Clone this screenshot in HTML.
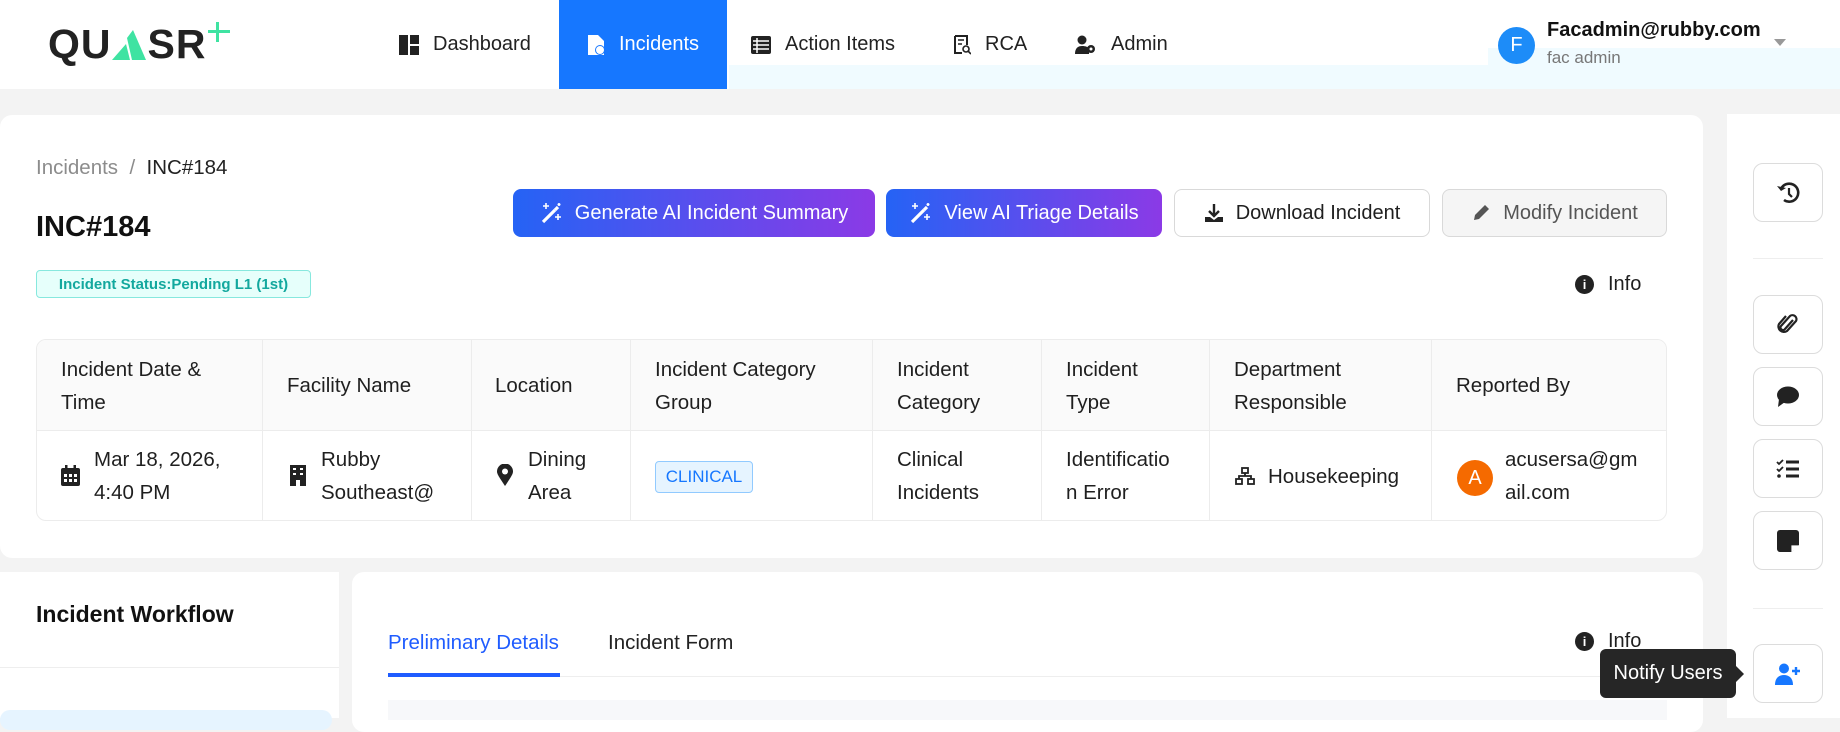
<!DOCTYPE html>
<html><head><meta charset="utf-8"><style>
*{box-sizing:border-box;margin:0;padding:0}
body{width:1840px;height:718px;overflow:hidden;background:#f3f3f3;font-family:"Liberation Sans",sans-serif;color:#1f1f1f;position:relative}
.abs{position:absolute}
.hdr{left:0;top:0;width:1840px;height:89px;background:#fff}
.nav{top:0;height:89px;display:flex;align-items:center;font-size:20px;color:#222}
.nav svg{margin-right:14px}
.card{background:#fff;border-radius:12px}
.btn{top:189px;height:48px;border-radius:8px;display:flex;align-items:center;justify-content:center;font-size:20px}
.grad{background:linear-gradient(90deg,#2563f5,#8b3ae6);color:#fff}
.th,.td{position:absolute;font-size:20.5px;line-height:33px}
.vl{position:absolute;top:339px;width:1px;height:182px;background:#ececec}
.sb{left:1753px;width:70px;height:59px;border:1px solid #dcdcdc;border-radius:10px;background:#fff;display:flex;align-items:center;justify-content:center}
</style></head><body>
<div class="abs hdr"></div>
<div class="abs" style="left:729px;top:65px;width:1111px;height:24px;background:#f0fbff"></div>
<div class="abs" style="left:1488px;top:48px;width:352px;height:41px;background:#f0fbff"></div>
<!-- logo -->
<div class="abs" style="left:48px;top:22px;font-size:41px;font-weight:bold;letter-spacing:1px;color:#222;line-height:44px">QU<span style="display:inline-block;width:36px"></span>SR</div>
<svg class="abs" style="left:112px;top:30px" width="36" height="30"><polygon points="0,30 14,14 18,30" fill="#3fe3a2"/><polygon points="21,0 34,30 20,30 15,8" fill="#3fe3a2"/></svg>
<svg class="abs" style="left:208px;top:22px" width="22" height="20"><rect x="8" y="0" width="3" height="20" fill="#3fe3a2"/><rect x="0" y="8" width="22" height="3" fill="#3fe3a2"/></svg>
<!-- nav -->
<div class="abs nav" style="left:399px"><svg width="20" height="20"><rect x="0" y="0" width="9" height="20" fill="#222"/><rect x="11" y="0" width="9" height="9" fill="#222"/><rect x="11" y="11" width="9" height="9" fill="#222"/></svg>Dashboard</div>
<div class="abs nav" style="left:559px;width:168px;background:#1677ff;color:#fff;justify-content:center"><svg width="18" height="20"><path d="M1 0h10l6 6v14H1z" fill="#fff"/><circle cx="13" cy="15" r="5" fill="#1677ff"/><circle cx="13" cy="15" r="4" fill="#fff"/></svg>Incidents</div>
<div class="abs nav" style="left:751px"><svg width="20" height="18"><rect x="0" y="0" width="20" height="18" rx="2" fill="#222"/><path d="M2 5h16M2 9h16M2 13h16M6 2v15" stroke="#fff" stroke-width="1.5"/></svg>Action Items</div>
<div class="abs nav" style="left:953px"><svg width="18" height="20"><path d="M2 1h12v9M2 1v17h7" stroke="#222" stroke-width="2" fill="none"/><path d="M5 5h6M5 9h4" stroke="#222" stroke-width="1.5"/><circle cx="13" cy="14" r="3" stroke="#222" stroke-width="1.6" fill="none"/><path d="M15 16l3 3" stroke="#222" stroke-width="1.6"/></svg>RCA</div>
<div class="abs nav" style="left:1075px"><svg width="22" height="20"><circle cx="7" cy="5" r="4.5" fill="#222"/><path d="M0 19c0-6 3-8 7-8s6 1 7 3v5z" fill="#222"/><circle cx="16" cy="14" r="4" fill="#222"/><circle cx="16" cy="14" r="1.5" fill="#fff"/></svg>Admin</div>
<!-- user -->
<div class="abs" style="left:1498px;top:27px;width:37px;height:37px;border-radius:50%;background:#1d8cf8;color:#fff;font-size:20px;display:flex;align-items:center;justify-content:center">F</div>
<div class="abs" style="left:1547px;top:19px;font-size:20px;font-weight:bold;color:#111">Facadmin@rubby.com</div>
<div class="abs" style="left:1547px;top:48px;font-size:17px;color:#777">fac admin</div>
<div class="abs" style="left:1774px;top:39px;width:0;height:0;border-left:6px solid transparent;border-right:6px solid transparent;border-top:7px solid #999"></div>
<!-- top card -->
<div class="abs card" style="left:0;top:115px;width:1703px;height:443px"></div>
<div class="abs" style="left:36px;top:156px;font-size:20.5px;color:#8c8c8c">Incidents &nbsp;/&nbsp; <span style="color:#222">INC#184</span></div>
<div class="abs" style="left:36px;top:211px;font-size:29px;font-weight:bold;color:#111">INC#184</div>
<div class="abs" style="left:36px;top:270px;width:275px;height:28px;border:1px solid #87e8de;background:#e6fffb;border-radius:4px;color:#13a89e;font-size:15px;font-weight:bold;display:flex;align-items:center;justify-content:center">Incident Status:Pending L1 (1st)</div>
<div class="abs btn grad" style="left:513px;width:362px"><svg width="22" height="22" style="margin-right:13px"><path d="M3 20L15 8" stroke="#fff" stroke-width="3.2"/><path d="M15 8l3-3" stroke="#fff" stroke-width="3.2"/><path d="M6 1v6M3 4h6M18 12v6M15 15h6M19 1v3M17.5 2.5h3" stroke="#fff" stroke-width="1.6"/></svg>Generate AI Incident Summary</div>
<div class="abs btn grad" style="left:886px;width:276px"><svg width="22" height="22" style="margin-right:13px"><path d="M3 20L15 8" stroke="#fff" stroke-width="3.2"/><path d="M15 8l3-3" stroke="#fff" stroke-width="3.2"/><path d="M6 1v6M3 4h6M18 12v6M15 15h6M19 1v3M17.5 2.5h3" stroke="#fff" stroke-width="1.6"/></svg>View AI Triage Details</div>
<div class="abs btn" style="left:1174px;width:256px;border:1px solid #d9d9d9;background:#fff"><svg width="20" height="20" style="margin-right:12px"><path d="M10 1v11M5 8l5 5 5-5" stroke="#222" stroke-width="2.4" fill="none"/><path d="M1 14h5l4 3 4-3h5v5H1z" fill="#222"/></svg>Download Incident</div>
<div class="abs btn" style="left:1442px;width:225px;border:1px solid #d9d9d9;background:#f5f5f5;color:#555"><svg width="20" height="20" style="margin-right:12px"><path d="M3 17l1-5L14 2l4 4L8 16z" fill="#555"/></svg>Modify Incident</div>
<div class="abs" style="left:1575px;top:273px;font-size:20px;display:flex;align-items:center"><span style="display:inline-block;width:19px;height:19px;border-radius:50%;background:#222;color:#fff;font-size:13px;font-weight:bold;text-align:center;line-height:19px;margin-right:14px">i</span>Info</div>
<!-- table -->
<div class="abs" style="left:36px;top:339px;width:1631px;height:182px;border:1px solid #ececec;border-radius:10px;overflow:hidden"><div style="height:91px;background:#fafafa;border-bottom:1px solid #ececec"></div></div>
<div class="vl" style="left:262px"></div><div class="vl" style="left:471px"></div><div class="vl" style="left:630px"></div><div class="vl" style="left:872px"></div><div class="vl" style="left:1041px"></div><div class="vl" style="left:1209px"></div><div class="vl" style="left:1431px"></div>
<div class="th" style="left:61px;top:353px">Incident Date &amp;<br>Time</div>
<div class="th" style="left:287px;top:369px">Facility Name</div>
<div class="th" style="left:495px;top:369px">Location</div>
<div class="th" style="left:655px;top:353px">Incident Category<br>Group</div>
<div class="th" style="left:897px;top:353px">Incident<br>Category</div>
<div class="th" style="left:1066px;top:353px">Incident<br>Type</div>
<div class="th" style="left:1234px;top:353px">Department<br>Responsible</div>
<div class="th" style="left:1456px;top:369px">Reported By</div>
<svg class="abs" style="left:61px;top:465px" width="19" height="21"><rect x="0" y="3" width="19" height="18" rx="2" fill="#222"/><rect x="4" y="0" width="2.5" height="5" fill="#222"/><rect x="12.5" y="0" width="2.5" height="5" fill="#222"/><g fill="#fff"><rect x="3" y="9" width="3" height="3"/><rect x="8" y="9" width="3" height="3"/><rect x="13" y="9" width="3" height="3"/><rect x="3" y="14" width="3" height="3"/><rect x="8" y="14" width="3" height="3"/><rect x="13" y="14" width="3" height="3"/></g></svg>
<div class="td" style="left:94px;top:443px">Mar 18, 2026,<br>4:40 PM</div>
<svg class="abs" style="left:290px;top:465px" width="16" height="21"><rect width="16" height="21" fill="#222"/><g fill="#fff"><rect x="3" y="3" width="3" height="2"/><rect x="10" y="3" width="3" height="2"/><rect x="3" y="8" width="3" height="2"/><rect x="10" y="8" width="3" height="2"/><rect x="6" y="15" width="4" height="6"/></g></svg>
<div class="td" style="left:321px;top:443px">Rubby<br>Southeast@</div>
<svg class="abs" style="left:497px;top:464px" width="16" height="22"><path d="M8 22C2 13 0 10 0 7.5A8 8 0 0116 7.5C16 10 14 13 8 22z" fill="#222"/><circle cx="8" cy="7.5" r="3" fill="#fff"/></svg>
<div class="td" style="left:528px;top:443px">Dining<br>Area</div>
<div class="abs" style="left:655px;top:461px;width:98px;height:32px;border:1px solid #91caff;background:#e6f4ff;border-radius:4px;color:#1677ff;font-size:17px;display:flex;align-items:center;justify-content:center">CLINICAL</div>
<div class="td" style="left:897px;top:443px">Clinical<br>Incidents</div>
<div class="td" style="left:1066px;top:443px">Identificatio<br>n Error</div>
<svg class="abs" style="left:1235px;top:467px" width="20" height="18"><g fill="none" stroke="#222" stroke-width="1.8"><rect x="7" y="1" width="6" height="5"/><rect x="1" y="12" width="6" height="5"/><rect x="13" y="12" width="6" height="5"/><path d="M10 6v3M4 12V9h12v3"/></g></svg>
<div class="td" style="left:1268px;top:460px">Housekeeping</div>
<div class="abs" style="left:1457px;top:460px;width:36px;height:36px;border-radius:50%;background:#f56a00;color:#fff;font-size:20px;display:flex;align-items:center;justify-content:center">A</div>
<div class="td" style="left:1505px;top:443px">acusersa@gm<br>ail.com</div>
<!-- bottom left -->
<div class="abs" style="left:0;top:572px;width:339px;height:146px;background:#fff"></div>
<div class="abs" style="left:36px;top:601px;font-size:23px;font-weight:bold;color:#111">Incident Workflow</div>
<div class="abs" style="left:0;top:667px;width:339px;height:1px;background:#eee"></div>
<div class="abs" style="left:0;top:710px;width:332px;height:20px;background:#e6f4ff;border-radius:10px"></div>
<!-- bottom right -->
<div class="abs card" style="left:352px;top:572px;width:1351px;height:160px"></div>
<div class="abs" style="left:388px;top:631px;font-size:20.5px;color:#1f5cff">Preliminary Details</div>
<div class="abs" style="left:608px;top:631px;font-size:20.5px;color:#222">Incident Form</div>
<div class="abs" style="left:388px;top:676px;width:1279px;height:1px;background:#eee"></div>
<div class="abs" style="left:388px;top:673px;width:172px;height:4px;background:#1f5cff"></div>
<div class="abs" style="left:388px;top:700px;width:1279px;height:20px;background:#f7f8fa"></div>
<div class="abs" style="left:1575px;top:630px;font-size:20px;display:flex;align-items:center"><span style="display:inline-block;width:19px;height:19px;border-radius:50%;background:#222;color:#fff;font-size:13px;font-weight:bold;text-align:center;line-height:19px;margin-right:14px">i</span>Info</div>
<!-- right sidebar -->
<div class="abs" style="left:1727px;top:114px;width:113px;height:604px;background:#fff"></div>
<div class="abs" style="left:1753px;top:258px;width:70px;height:1px;background:#eee"></div>
<div class="abs" style="left:1753px;top:608px;width:70px;height:1px;background:#eee"></div>
<div class="abs sb" style="top:163px"><svg width="24" height="24"><path d="M5 8a9 9 0 113 11" stroke="#222" stroke-width="2.6" fill="none"/><path d="M1 5l4 5 5-3z" fill="#222"/><path d="M13 7v6l3 3" stroke="#222" stroke-width="2.2" fill="none"/></svg></div>
<div class="abs sb" style="top:295px"><svg width="22" height="24"><path d="M16 7l-8 9a2.5 2.5 0 01-4-3l9-10a4 4 0 016 5l-9 10a5.5 5.5 0 01-8-7l7-8" stroke="#222" stroke-width="2.2" fill="none"/></svg></div>
<div class="abs sb" style="top:367px"><svg width="24" height="22"><ellipse cx="12" cy="9" rx="11" ry="8.5" fill="#222"/><path d="M3 13l-1 8 7-5z" fill="#222"/></svg></div>
<div class="abs sb" style="top:439px"><svg width="24" height="20"><path d="M1 3l2 2 4-4M1 10l2 2 4-4" stroke="#222" stroke-width="1.8" fill="none"/><circle cx="3" cy="17" r="1.8" fill="#222"/><path d="M10 3h13M10 10h13M10 17h13" stroke="#222" stroke-width="3"/></svg></div>
<div class="abs sb" style="top:511px"><svg width="22" height="22"><path d="M3 0h16a3 3 0 013 3v12l-7 7H3a3 3 0 01-3-3V3a3 3 0 013-3z" fill="#222"/><path d="M15 22v-6h7" fill="#fff" stroke="#fff" stroke-width="1.2"/></svg></div>
<div class="abs sb" style="top:644px"><svg width="26" height="22"><circle cx="9" cy="5.5" r="5" fill="#1677ff"/><path d="M0 22c0-7 4-10 9-10s9 3 9 10z" fill="#1677ff"/><path d="M21 4v8M17 8h8" stroke="#1677ff" stroke-width="2.4"/></svg></div>
<!-- tooltip -->
<div class="abs" style="left:1600px;top:649px;width:136px;height:49px;background:#262626;border-radius:6px;color:#fff;font-size:20px;display:flex;align-items:center;justify-content:center">Notify Users</div>
<div class="abs" style="left:1736px;top:666px;width:0;height:0;border-top:8px solid transparent;border-bottom:8px solid transparent;border-left:8px solid #262626"></div>
</body></html>
